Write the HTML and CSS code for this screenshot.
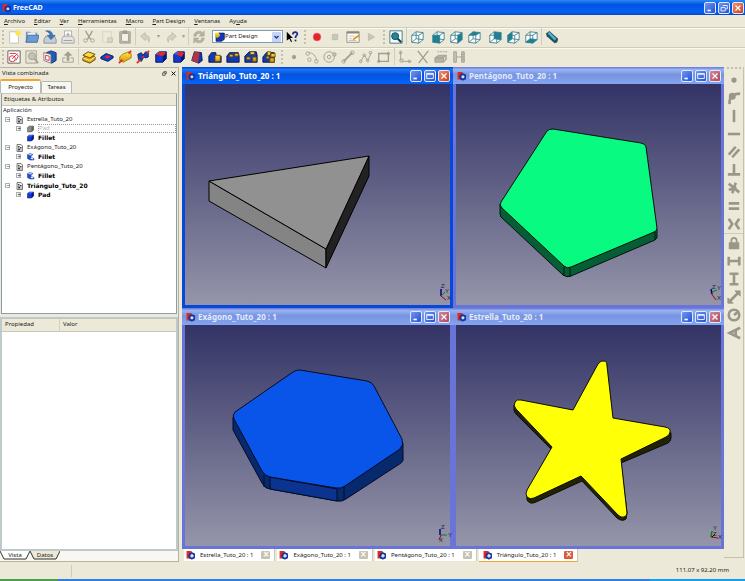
FILE: index.html
```html
<!DOCTYPE html>
<html lang="es">
<head>
<meta charset="utf-8">
<title>FreeCAD</title>
<link rel="stylesheet" href="styles.css">
</head>
<body>
<svg class="defs" aria-hidden="true">
  <defs>
    <linearGradient id="gold" x1="0" y1="0" x2="0" y2="1"><stop offset="0" stop-color="#ffe45a"/><stop offset="1" stop-color="#d39a00"/></linearGradient>
    <symbol id="logo" viewBox="0 0 16 16"><path d="M1 1h9v4H6v2h3v3H6v4H1z" fill="#e0281c"/><circle cx="10.500" cy="9.500" r="4.500" fill="none" stroke="#16389c" stroke-width="3"/><path d="M10.500 3v2M10.500 14v2M4 9.500h2M15 9.500h1M6 5l1 1M14 13l1 1M6 14l1-1M14 6l1-1" stroke="#16389c" stroke-width="2"/><circle cx="10.500" cy="9.500" r="2.500" fill="#d3e0ff"/></symbol>
    <symbol id="cube" viewBox="0 0 16 16"><path d="M2 5l4-3h8v8l-4 4H2z" fill="#1238d8" stroke="#051047"/><path d="M2 5l4-3h8l-4 3z" fill="#3c68ff"/><path d="M10 5l4-3v8l-4 4z" fill="#06187c"/></symbol>
    <symbol id="cubegray" viewBox="0 0 16 16"><path d="M2 5l4-3h8v8l-4 4H2z" fill="#8a8a86" stroke="#4c4c4a"/><path d="M10 5l4-3v8l-4 4z" fill="#5c5c5a"/></symbol>
    <symbol id="fil" viewBox="0 0 16 16"><path d="M2 3l5-2 6 2-4 3v3l6 2v3H7l-5-3z" fill="#1d4fd0" stroke="#102a66"/><path d="M2 3l5-2 5 2-4 2z" fill="#b9ccf5"/><path d="M9 9l5 2v2l-6-1z" fill="#dfe8fb"/></symbol>
    <symbol id="doc" viewBox="0 0 16 16"><path d="M3 1h8l3 3v11H3z" fill="#eee" stroke="#555" stroke-width="1.500"/><path d="M5 4h3v3H5zM9 6h3v3H9zM5 9h4v4H5zM10 11h2v2h-2z" fill="#444"/></symbol>
    <symbol id="wire" viewBox="0 0 16 16"><path d="M2 6v8l8 1V6zM2 6l5-4 8 1-5 3M15 3v8l-5 4M7 2v8l-5 4M7 10l8 1" fill="none" stroke="#3f7f8d"/></symbol>
    <symbol id="min" viewBox="0 0 12 12"><path d="M3 9h4" stroke="#fff" stroke-width="2"/></symbol>
    <symbol id="max" viewBox="0 0 12 12"><path d="M2 3h8v6H2zM2 4h8" fill="none" stroke="#fff"/></symbol>
    <symbol id="x" viewBox="0 0 12 12"><path d="M3 3l6 6M9 3l-6 6" stroke="#fff" stroke-width="1.500"/></symbol>
  </defs>
</svg>

<header class="titlebar">
  <svg class="logo"><use href="#logo"/></svg>
  <h1>FreeCAD</h1>
  <div class="winbtns">
    <button aria-label="Minimizar"><svg><use href="#min"/></svg></button>
    <button aria-label="Restaurar"><svg viewBox="0 0 12 12"><path d="M5 4V3h5v4H8M2.500 5.500h5v4h-5z" fill="none" stroke="#fff"/></svg></button>
    <button class="close" aria-label="Cerrar"><svg><use href="#x"/></svg></button>
  </div>
</header>

<nav class="menubar">
  <a href="#"><u>A</u>rchivo</a><a href="#"><u>E</u>ditar</a><a href="#"><u>V</u>er</a><a href="#"><u>H</u>erramientas</a><a href="#"><u>M</u>acro</a><a href="#"><u>P</u>art Design</a><a href="#"><u>V</u>entanas</a><a href="#">Ay<u>u</u>da</a>
</nav>

<div class="toolbar">
  <i class="grip"></i>
  <button aria-label="Nuevo"><svg viewBox="0 0 16 16"><path d="M3 2h10v13H3z" fill="#fff" stroke="#bbb"/><circle cx="12.500" cy="3.500" r="3" fill="#ffe640"/></svg></button>
  <button aria-label="Abrir"><svg viewBox="0 0 16 16"><path d="M1 2h5l1 1h7v11H1z" fill="#7894b4"/><path d="M3 3h9v4H3z" fill="#eee"/><path d="M3 6h13l-2 8H1z" fill="#6b9bd2" stroke="#3f6ea8"/></svg></button>
  <button aria-label="Guardar"><svg viewBox="0 0 16 16"><path d="M3 7h10l2 4v4H1v-4z" fill="#c5cdd6" stroke="#8390a0"/><path d="M3 1c5-1 8 1 8 5h3l-5 5-4-5h3c0-2-2-4-5-5z" fill="#3b78b8" stroke="#215082" stroke-width=".5"/></svg></button>
  <button aria-label="Imprimir"><svg viewBox="0 0 16 16"><path d="M4 1h8v7H4z" fill="#fff" stroke="#aaa"/><path d="M3 7h10l2 3v5H1v-5z" fill="#e4e4e2" stroke="#9e9e9e"/><path d="M3 12h10M8 3v4M6 5h4" stroke="#999"/></svg></button>
  <i class="sep"></i>
  <button class="off" aria-label="Cortar"><svg viewBox="0 0 16 16"><path d="M4 1l6 10M12 1L6 11" stroke-width="1.500"/><circle cx="4" cy="12" r="2"/><circle cx="12" cy="12" r="2"/></svg></button>
  <button class="off dim" aria-label="Copiar"><svg viewBox="0 0 16 16"><path d="M3 2h10v12H3z" fill="#efede0" opacity=".5"/><path d="M9 9h5v5H9z" fill="#d2cfbf"/></svg></button>
  <button class="off" aria-label="Pegar"><svg viewBox="0 0 16 16"><path d="M2 2h12v13H2z" fill="#bdbaab"/><path d="M4 4h8v9H4z" fill="#f4f2e8"/><path d="M6 1h4v3H6z" fill="#a19e90"/></svg></button>
  <i class="sep"></i>
  <button class="off dim" aria-label="Deshacer"><svg viewBox="0 0 16 16"><path d="M2 7l5-4v3c5 0 6 4 4 8 0-4-2-4-4-4v2z" fill="#c5c2b3"/></svg></button>
  <i class="caret">▾</i>
  <button class="off dim" aria-label="Rehacer"><svg viewBox="0 0 16 16"><path d="M14 7L9 3v3c-5 0-6 4-4 8 0-4 2-4 4-4v2z" fill="#c5c2b3"/></svg></button>
  <i class="caret">▾</i>
  <i class="sep"></i>
  <button class="off" aria-label="Actualizar"><svg viewBox="0 0 16 16"><path d="M2 7c0-6 8-7 10-4l2-2v6H8l2-2c-2-2-5-1-5 2zM14 9c0 6-8 7-10 4l-2 2V9h6l-2 2c2 2 5 1 5-2z" fill="#b5b2a4" stroke-width=".5"/></svg></button>
  <div class="combo">
    <svg viewBox="0 0 16 16"><path d="M3 5l4-2h8v9l-4 3H3z" fill="#1238b8" stroke="#051047"/><path d="M1 3l6-1 2 5-4 3-3-1z" fill="url(#gold)"/></svg>
    <select aria-label="Banco de trabajo"><option>Part Design</option></select>
    <svg class="drop" viewBox="0 0 8 10"><path d="M2 4l2 2 2-2" fill="none" stroke="#31456f" stroke-width="1.500"/></svg>
  </div>
  <button aria-label="¿Qué es esto?"><svg viewBox="0 0 16 16"><path d="M2 2v10l3-2 2 4 1-1-2-4h3z" fill="#000"/><path d="M9 5c0-4 6-3 5 0-1 2-2 1-2 4" fill="none" stroke="#1c2b8c" stroke-width="2"/><path d="M11 11h2v2h-2z" fill="#1c2b8c"/></svg></button>
  <i class="grip wide"></i>
  <button aria-label="Grabar macro"><svg viewBox="0 0 16 16"><circle cx="8" cy="8" r="4.500" fill="#e8222a" stroke="#f09090" stroke-width=".5"/></svg></button>
  <button class="off dim" aria-label="Detener macro"><svg viewBox="0 0 16 16"><path d="M5 5h6v6H5z" fill="#b5b2a4"/></svg></button>
  <button aria-label="Macros"><svg viewBox="0 0 16 16"><path d="M1 2h14v12H1z" fill="#fdfdf6" stroke="#8a8878"/><path d="M1 2h14v2H1z" fill="#8a8878"/><path d="M3 7h7M3 10h4M3 12h9" stroke="#bbb"/><path d="M8 11l7-5" stroke="#d9901c" stroke-width="2"/></svg></button>
  <button class="off dim" aria-label="Ejecutar macro"><svg viewBox="0 0 16 16"><path d="M5 4l7 4-7 4z" fill="#b5b2a4"/></svg></button>
  <i class="grip wide"></i>
  <button aria-label="Ajustar todo"><svg viewBox="0 0 16 16"><path d="M1 1h14v14H1z" fill="#fff" stroke="#2f7080"/><circle cx="7" cy="7" r="4" fill="#25869a" stroke="#0d4652"/><path d="M10 10l4 4" stroke="#0d4652" stroke-width="2.500"/></svg></button>
  <i class="sep"></i>
  <button aria-label="Axonométrica"><svg viewBox="0 0 16 16"><path d="M2 6l5-4 8 1v8l-5 4-8-1z" fill="#fff"/><use href="#wire"/></svg></button>
  <i class="sep clear"></i>
  <button aria-label="Frontal"><svg viewBox="0 0 16 16"><path d="M2 6l5-4 8 1v8l-5 4-8-1z" fill="#fff"/><use href="#wire"/><path d="M2 6h8v9l-8-1z" fill="#1f7f93"/></svg></button>
  <button aria-label="Superior"><svg viewBox="0 0 16 16"><path d="M2 6l5-4 8 1v8l-5 4-8-1z" fill="#fff"/><use href="#wire"/><path d="M10 6l5-3v8l-5 4z" fill="#1f7f93"/></svg></button>
  <button aria-label="Derecha"><svg viewBox="0 0 16 16"><path d="M2 6l5-4 8 1v8l-5 4-8-1z" fill="#fff"/><use href="#wire"/><path d="M2 6l5-4 8 1-5 3z" fill="#1f7f93"/></svg></button>
  <i class="sep clear"></i>
  <button aria-label="Posterior"><svg viewBox="0 0 16 16"><path d="M2 6l5-4 8 1v8l-5 4-8-1z" fill="#fff"/><use href="#wire"/><path d="M7 2l8 1v8l-8-1z" fill="#1f7f93"/></svg></button>
  <button aria-label="Izquierda"><svg viewBox="0 0 16 16"><path d="M2 6l5-4 8 1v8l-5 4-8-1z" fill="#fff"/><use href="#wire"/><path d="M2 6l5-4v8l-5 4z" fill="#1f7f93"/></svg></button>
  <button aria-label="Inferior"><svg viewBox="0 0 16 16"><path d="M2 6l5-4 8 1v8l-5 4-8-1z" fill="#fff"/><use href="#wire"/><path d="M2 14l5-4 8 1-5 4z" fill="#1f7f93"/></svg></button>
  <i class="sep"></i>
  <button aria-label="Medir"><svg viewBox="0 0 16 16"><path d="M1 4l4-3 10 9-1 4-3 1L2 7z" fill="#24505c"/><path d="M3 4l2-2 8 8-2 2z" fill="#4cb3c8"/></svg></button>
</div>

<div class="toolbar">
  <i class="grip"></i>
  <button aria-label="Nuevo croquis"><svg viewBox="0 0 16 16"><path d="M1 1h14v14H1z" fill="#fff" stroke="#555"/><circle cx="6" cy="10" r="3.500" fill="none" stroke="#d8232a"/><path d="M3 4h7l3 3-3 5M6 10l6-6" fill="none" stroke="#d8232a"/></svg></button>
  <button class="off" aria-label="Ver croquis"><svg viewBox="0 0 16 16"><path d="M1 1h12v14H1z" fill="#e6e3d6"/><circle cx="8" cy="7" r="4" fill="#c6c3b6"/><path d="M11 10l4 5" stroke-width="2"/></svg></button>
  <button aria-label="Mapear croquis"><svg viewBox="0 0 16 16"><path d="M4 3l5-2 6 2v9l-5 3-4-2z" fill="#1c5fb4" stroke="#0b2b62"/><path d="M1 3l8 2v10l-8-3z" fill="#fff" stroke="#777"/><path d="M3 6l4 1v5l-4-1z" fill="none" stroke="#d8232a"/></svg></button>
  <button class="off" aria-label="Salir del croquis"><svg viewBox="0 0 16 16"><path d="M5 9H2v5h12V9h-3"/><path d="M8 2l4 4H9v6H7V6H4z" fill="#a19e90"/></svg></button>
  <i class="sep"></i>
  <button aria-label="Pad"><svg viewBox="0 0 16 16"><path d="M1 9l6-4 8 3v3l-6 4-8-3z" fill="#e0a810" stroke="#5b4000"/><path d="M1 6l6-4 8 3-6 4z" fill="#ffd93c" stroke="#5b4000"/><path d="M1 9l8 3 6-4" fill="none" stroke="#fff2b0"/></svg></button>
  <button aria-label="Vaciado"><svg viewBox="0 0 16 16"><path d="M1 8l6-4 8 3v2l-6 4-8-3z" fill="#1540c8" stroke="#071a5c"/><path d="M5 8l3-2 4 1-3 3z" fill="#e22b20"/></svg></button>
  <button aria-label="Revolución"><svg viewBox="0 0 16 16"><path d="M2 8l3-3 7-3 3 2v5l-9 5-4-2z" fill="url(#gold)" stroke="#a87800"/><path d="M1 15l4-4M12 4l3-3" stroke="#e22b20" stroke-width="2"/></svg></button>
  <button aria-label="Ranura"><svg viewBox="0 0 16 16"><path d="M2 5l4-2 2 3 3-4 3 1v5l-3 1-2-1-3 5-3-2z" fill="#173fbd" stroke="#081b60"/><path d="M1 15l4-4M7 9l2-2M12 4l3-3" stroke="#e22b20" stroke-width="2"/></svg></button>
  <button aria-label="Redondeo"><svg viewBox="0 0 16 16"><use href="#cube"/><path d="M2 5l5-3 7 1-4 4z" fill="#df2a20"/></svg></button>
  <button aria-label="Chaflán"><svg viewBox="0 0 16 16"><use href="#cube"/><path d="M5 5l3-3 6 1-3 5z" fill="#df2a20"/></svg></button>
  <button aria-label="Inclinación"><svg viewBox="0 0 16 16"><path d="M2 12L5 2l8 1 1 9-4 3z" fill="#1238b8" stroke="#051047"/><path d="M2 12L5 2l6 1-2 12z" fill="#b33544"/></svg></button>
  <button aria-label="Simetría"><svg viewBox="0 0 16 16"><path d="M1 7l3-4h5v4h6v7H1z" fill="#1238b8" stroke="#051047"/><path d="M8 6h6v7H8z" fill="url(#gold)" stroke="#664800"/></svg></button>
  <button aria-label="Patrón lineal"><svg viewBox="0 0 16 16"><path d="M1 7l3-4h10l1 4v7H1z" fill="#1238b8" stroke="#051047"/><path d="M4 5h4v3H4zM10 4h4v3h-4z" fill="url(#gold)" stroke="#664800"/></svg></button>
  <button aria-label="Patrón polar"><svg viewBox="0 0 16 16"><path d="M1 7l5-5h8l1 4v8H1z" fill="#1238b8" stroke="#051047"/><path d="M7 2h5v3H7zM10 8h4v5h-4zM3 8h4v3H3z" fill="url(#gold)" stroke="#664800"/></svg></button>
  <button aria-label="Transformación múltiple"><svg viewBox="0 0 16 16"><path d="M1 8l4-5h9v11H1z" fill="#1238b8" stroke="#051047"/><path d="M6 2h4v4H6zM10 4h5v4h-5zM9 9h5v5H9zM5 7h3v3H5z" fill="url(#gold)" stroke="#664800"/></svg></button>
  <i class="grip wide"></i>
  <button class="off" aria-label="Punto"><svg viewBox="0 0 16 16"><circle cx="8" cy="8" r="2" fill="#a19e90"/></svg></button>
  <button class="off" aria-label="Arco"><svg viewBox="0 0 16 16"><path d="M4 3c5 0 9 4 9 9"/><circle cx="3" cy="4" r="2"/><circle cx="5" cy="11" r="2"/><circle cx="13" cy="13" r="2"/></svg></button>
  <button class="off" aria-label="Círculo"><svg viewBox="0 0 16 16"><circle cx="7" cy="8" r="6"/><circle cx="7" cy="8" r="2"/><circle cx="13" cy="5" r="2" fill="#c5c2b3"/></svg></button>
  <button class="off" aria-label="Línea"><svg viewBox="0 0 16 16"><path d="M3 13L13 3" stroke-width="2"/><circle cx="3" cy="13" r="2"/><circle cx="13" cy="3" r="2"/></svg></button>
  <button class="off" aria-label="Polilínea"><svg viewBox="0 0 16 16"><path d="M2 13l4-7 4 6 4-9"/><circle cx="2" cy="13" r="1.500"/><circle cx="6" cy="6" r="1.500"/><circle cx="10" cy="12" r="1.500"/><circle cx="13" cy="3" r="1.500"/></svg></button>
  <button class="off" aria-label="Rectángulo"><svg viewBox="0 0 16 16"><path d="M2 4h11v9H2z" stroke-width="1.500"/><circle cx="2" cy="13" r="1.500"/><circle cx="13" cy="4" r="1.500"/></svg></button>
  <i class="sep"></i>
  <button class="off" aria-label="Empalme"><svg viewBox="0 0 16 16"><path d="M3 1v9c0 2 1 3 3 3h9"/><circle cx="3" cy="3" r="1.500"/><circle cx="4" cy="12" r="2"/><circle cx="13" cy="13" r="1.500"/></svg></button>
  <button class="off" aria-label="Recortar"><svg viewBox="0 0 16 16"><path d="M2 1l11 14M14 1L3 15" stroke-width="1.500"/></svg></button>
  <button class="off" aria-label="Geometría externa"><svg viewBox="0 0 16 16"><path d="M1 9l4-3h9l-3 3zM1 9v5h10V9M11 14l3-3V6" fill="#b5b2a4"/><path d="M4 2h11" stroke-dasharray="2 1"/></svg></button>
  <button class="off" aria-label="Construcción"><svg viewBox="0 0 16 16"><path d="M2 2h3v12H2zM5 8h6M11 2h3v12h-3zM11 5h3M11 8h3M11 11h3" fill="#c5c2b3"/></svg></button>
</div>

<main class="work">
  <aside class="dock">
    <div class="dockhead"><h2>Vista combinada</h2>
      <button aria-label="Flotar"><svg viewBox="0 0 8 8"><path d="M3 3V1h4v3H5M1 3h4v4H1z" fill="none" stroke="#222"/></svg></button>
      <button aria-label="Cerrar panel"><svg viewBox="0 0 8 8"><path d="M1 1l6 6M7 1L1 7" stroke="#000" stroke-width="1.500"/></svg></button>
    </div>
    <div class="docktabs"><button class="on">Proyecto</button><button>Tareas</button></div>
    <section class="tree">
      <h3>Etiquetas &amp; Atributos</h3>
      <p>Aplicación</p>
      <ul>
        <li><div class="row"><i class="exp">−</i><svg><use href="#doc"/></svg><span>Estrella_Tuto_20</span></div>
          <ul>
            <li class="row hid"><i class="exp">+</i><svg><use href="#cubegray"/></svg><span>Pad</span></li>
            <li class="row bold"><i class="exp none"></i><svg><use href="#cube"/></svg><span>Fillet</span></li>
          </ul></li>
        <li><div class="row"><i class="exp">−</i><svg><use href="#doc"/></svg><span>Exágono_Tuto_20</span></div>
          <ul><li class="row bold"><i class="exp">+</i><svg><use href="#fil"/></svg><span>Fillet</span></li></ul></li>
        <li><div class="row"><i class="exp">−</i><svg><use href="#doc"/></svg><span>Pentágono_Tuto_20</span></div>
          <ul><li class="row bold"><i class="exp">+</i><svg><use href="#fil"/></svg><span>Fillet</span></li></ul></li>
        <li><div class="row bold"><i class="exp">−</i><svg><use href="#doc"/></svg><span>Triángulo_Tuto_20</span></div>
          <ul><li class="row bold"><i class="exp">+</i><svg><use href="#cube"/></svg><span>Pad</span></li></ul></li>
      </ul>
    </section>
    <section class="props">
      <table><thead><tr><th>Propiedad</th><th>Valor</th></tr></thead></table>
    </section>
    <div class="foottabs">
      <button class="on"><svg viewBox="0 0 30 9" preserveAspectRatio="none"><path d="M0 0l4 8h22l4-8" fill="#fff" stroke="#333"/></svg><span>Vista</span></button>
      <button><svg viewBox="0 0 30 9" preserveAspectRatio="none"><path d="M0 0l4 8h22l4-8" fill="#ece9d8" stroke="#333"/></svg><span>Datos</span></button>
    </div>
  </aside>

  <section class="center">
    <div class="mdi">
      <article class="win active">
        <header><svg class="logo"><use href="#logo"/></svg><h2>Triángulo_Tuto_20 : 1</h2>
          <div class="winbtns"><button aria-label="Minimizar"><svg><use href="#min"/></svg></button><button aria-label="Maximizar"><svg><use href="#max"/></svg></button><button class="close" aria-label="Cerrar"><svg><use href="#x"/></svg></button></div>
        </header>
        <div class="view">
          <svg class="scene" viewBox="0 0 265 221"><g stroke="#000" stroke-linejoin="round"><path d="M24 97l117 68v19L24 117z" fill="#848484"/><path d="M141 165l43-93v20l-43 92z" fill="#222"/><path d="M24 97L184 72l-43 93z" fill="#919191"/></g></svg>
          <svg class="axis" viewBox="0 0 14 18"><path d="M3 6v7" stroke="#00008b" stroke-width="1.500"/><path d="M3 13l4-4" stroke="#080"/><path d="M3 13l5 4" stroke="#a00"/><text x="3" y="5">Z</text><text x="7" y="10">Y</text><text x="9" y="17">X</text></svg>
        </div>
      </article>
      <article class="win">
        <header><svg class="logo"><use href="#logo"/></svg><h2>Pentágono_Tuto_20 : 1</h2>
          <div class="winbtns"><button aria-label="Minimizar"><svg><use href="#min"/></svg></button><button aria-label="Maximizar"><svg><use href="#max"/></svg></button><button class="close" aria-label="Cerrar"><svg><use href="#x"/></svg></button></div>
        </header>
        <div class="view">
          <svg class="scene" viewBox="0 0 265 221"><g stroke="#04120a" stroke-linejoin="round"><path d="M44 120v10l1 3 62 58q4 3 8 1l84-36q3-2 2-5v-6z" fill="#065e36"/><path d="M108 183v9M114 184v9M199 148v8" fill="none"/><path d="M97 45l88 14q5 1 5 4l11 81q0 3-3 4l-83 35q-4 2-7-1l-62-58q-3-3-1-6l46-71q2-2 6-2z" fill="#09fa80"/></g></svg>
          <svg class="axis" viewBox="0 0 14 18"><path d="M2 6l1 5" stroke="#00008b" stroke-width="1.500"/><path d="M3 9l5-2" stroke="#080"/><path d="M2 10l5 7" stroke="#a00"/><text x="3" y="6">Z</text><text x="8" y="7">Y</text><text x="8" y="17">X</text></svg>
        </div>
      </article>
      <article class="win">
        <header><svg class="logo"><use href="#logo"/></svg><h2>Exágono_Tuto_20 : 1</h2>
          <div class="winbtns"><button aria-label="Minimizar"><svg><use href="#min"/></svg></button><button aria-label="Maximizar"><svg><use href="#max"/></svg></button><button class="close" aria-label="Cerrar"><svg><use href="#x"/></svg></button></div>
        </header>
        <div class="view">
          <svg class="scene" viewBox="0 0 265 221"><g stroke="#050b22" stroke-linejoin="round"><path d="M48 92v13l29 53q3 6 8 6l67 12q5 1 9-2l55-36q3-2 2-6v-14z" fill="#072a6e"/><path d="M85 152l67 12v12l-67-12z" fill="#0a3490"/><path d="M79 150v12M159 162v13" fill="none"/><path d="M115 45l67 11q5 1 7 5l28 53q2 6-2 10l-55 37q-4 3-9 2l-66-11q-5-1-8-6L49 94q-2-4 1-7l58-40q3-2 7-2z" fill="#0955ea"/></g></svg>
          <svg class="axis" viewBox="0 0 14 18"><path d="M2 5v6" stroke="#00008b" stroke-width="1.500"/><path d="M3 11h6" stroke="#080"/><path d="M3 11l-2 5" stroke="#a00"/><text x="3" y="5">Z</text><text x="10" y="13">Y</text><text x="1" y="18">X</text></svg>
        </div>
      </article>
      <article class="win">
        <header><svg class="logo"><use href="#logo"/></svg><h2>Estrella_Tuto_20 : 1</h2>
          <div class="winbtns"><button aria-label="Minimizar"><svg><use href="#min"/></svg></button><button aria-label="Maximizar"><svg><use href="#max"/></svg></button><button class="close" aria-label="Cerrar"><svg><use href="#x"/></svg></button></div>
        </header>
        <div class="view">
          <svg class="scene" viewBox="0 0 265 221"><g stroke="#0c0c00" stroke-linejoin="round"><path d="M58 80v5q0 2 3 5l35 35 2 2-27 43v5q3 5 9 2l46-21 35 37q5 4 9 1l1-6-6-50 47-20q3-2 3-5v-5z" fill="#222208"/><path d="M142 39q3-4 6-3 3 0 3 5l6 52 52 9q6 1 5 5 0 3-4 5l-45 22 6 54q0 3-3 4-3 1-6-2l-37-39-47 22q-4 2-7-1-2-3 0-7l25-43-36-38q-3-3-1-7 2-3 6-2l52 10z" fill="#ffff05"/></g></svg>
          <svg class="axis" viewBox="0 0 14 18"><path d="M2 13l1-6" stroke="#080" stroke-width="1.500"/><path d="M2 13l7 1" stroke="#a00"/><path d="M3 13l3-3" stroke="#008"/><text x="4" y="6">Y</text><text x="4" y="12">Z</text><text x="9" y="15">X</text></svg>
        </div>
      </article>
    </div>
    <div class="mditabs">
      <div class="mtab"><svg class="logo"><use href="#logo"/></svg><button>Estrella_Tuto_20 : 1</button><button class="x" aria-label="Cerrar Estrella">×</button></div>
      <div class="mtab"><svg class="logo"><use href="#logo"/></svg><button>Exágono_Tuto_20 : 1</button><button class="x" aria-label="Cerrar Exágono">×</button></div>
      <div class="mtab"><svg class="logo"><use href="#logo"/></svg><button>Pentágono_Tuto_20 : 1</button><button class="x" aria-label="Cerrar Pentágono">×</button></div>
      <div class="mtab on"><svg class="logo"><use href="#logo"/></svg><button>Triángulo_Tuto_20 : 1</button><button class="x" aria-label="Cerrar Triángulo">×</button></div>
    </div>
  </section>

  <aside class="sidebar">
    <i class="hgrip"></i>
    <button aria-label="Coincidencia"><svg viewBox="0 0 16 16"><circle cx="8" cy="8" r="2" fill="#99978a" stroke-width="2"/></svg></button>
    <button aria-label="Punto en objeto"><svg viewBox="0 0 16 16"><path d="M3 15C2 7 7 3 15 3"/><circle cx="6" cy="6" r="2.500" fill="#99978a"/></svg></button>
    <button aria-label="Vertical"><svg viewBox="0 0 16 16"><path d="M8 1v14"/></svg></button>
    <button aria-label="Horizontal"><svg viewBox="0 0 16 16"><path d="M1 8h14"/></svg></button>
    <button aria-label="Paralela"><svg viewBox="0 0 16 16"><path d="M2 11l8-9M6 14l8-9"/></svg></button>
    <button aria-label="Perpendicular"><svg viewBox="0 0 16 16"><path d="M8 1v12M1 13h14"/></svg></button>
    <button aria-label="Tangente"><svg viewBox="0 0 16 16"><path d="M2 3l12 10M2 10l9-2M6 14l4-12"/></svg></button>
    <button aria-label="Igual"><svg viewBox="0 0 16 16"><path d="M2 5h12M2 11h12"/></svg></button>
    <button aria-label="Simétrica"><svg viewBox="0 0 16 16"><path d="M2 2l4 6-4 6M14 2l-4 6 4 6"/></svg></button>
    <hr>
    <button aria-label="Bloquear"><svg viewBox="0 0 16 16"><path d="M3 8h10v6H3z" fill="#99978a" stroke-width="2"/><path d="M5 8V5c0-4 6-4 6 0v3" stroke-width="2"/></svg></button>
    <button aria-label="Distancia horizontal"><svg viewBox="0 0 16 16"><path d="M2 3v10M14 3v10M2 8h12"/></svg></button>
    <button aria-label="Distancia vertical"><svg viewBox="0 0 16 16"><path d="M3 2h10M3 14h10M8 2v12"/></svg></button>
    <button aria-label="Longitud"><svg viewBox="0 0 16 16"><path d="M4 12l8-8"/><path d="M9 1h6v6zM1 9v6h6z" fill="#99978a" stroke-width="1"/></svg></button>
    <button aria-label="Radio"><svg viewBox="0 0 16 16"><circle cx="8" cy="8" r="6"/><path d="M8 8l4-3"/></svg></button>
    <button aria-label="Ángulo"><svg viewBox="0 0 16 16"><path d="M15 2L3 8l12 6M10 4v8"/></svg></button>
  </aside>
</main>

<footer class="status"><span></span><output>111.07 x 92.20 mm</output></footer>
<div class="taskbar"><i></i><b></b></div>
</body>
</html>
```
FILE: styles.css
```css
* { box-sizing: border-box; }
html, body { height: 100%; }
body {
  margin: 0;
  display: flex;
  flex-direction: column;
  background: #ece9d8;
  color: #222;
  font: 6px/9px "Noto Sans", "Open Sans", sans-serif;
  overflow: hidden;
}
h1, h2, h3, p, ul { margin: 0; padding: 0; font: inherit; list-style: none; }
button { margin: 0; padding: 0; border: 0; background: none; font: inherit; color: inherit; }
svg { display: block; flex: none; }
i { font-style: normal; }
a { color: inherit; text-decoration: none; }
.defs { position: absolute; width: 0; height: 0; }
.logo { width: 9px; height: 10px; }

/* Window frame */
.titlebar {
  display: flex; align-items: center; gap: 2px;
  flex: none; height: 15px; padding: 0 1px 0 2px;
  background: linear-gradient(#2b8af5, #0453de 30%, #0560f5 80%, #0346c4);
}
.titlebar h1 { flex: 1; color: #fff; font: bold 7px/12px "Noto Sans", sans-serif; }
.winbtns { display: flex; gap: 2px; }
.winbtns button {
  width: 12px; height: 12px;
  border: 1px solid #dfe8ff; border-radius: 2px;
  background: linear-gradient(135deg, #6f97f2, #2250d8);
}
.winbtns svg { width: 10px; height: 10px; }
.winbtns .close { background: linear-gradient(135deg, #f0906e, #d03c14); }

.menubar { display: flex; gap: 9px; flex: none; height: 12px; padding: 2px 4px; }

/* Toolbars */
.toolbar {
  display: flex; align-items: center;
  flex: none; height: 20px; padding: 0 0 2px 2px;
  border-top: 1px solid #cfccbc;
  box-shadow: inset 0 1px #faf9f2;
}
.toolbar button { width: 18px; height: 16px; display: grid; place-items: center; flex: none; }
.toolbar button svg { width: 14px; height: 14px; }
.off svg { fill: none; stroke: #a19e90; }
.dim { opacity: .6; }
.grip { width: 2px; height: 14px; margin-right: 1px; border-left: 2px dotted #c3c0b0; flex: none; }
.grip.wide { margin: 0 2px 0 3px; }
.sep { width: 1px; height: 17px; margin: 0 1px; background: #d0cdbd; flex: none; }
.sep.clear { background: none; }
.caret { width: 7px; color: #a19e90; text-align: center; }
.combo {
  display: flex; align-items: center;
  width: 71px; height: 13px; margin-left: 4px; padding: 0 1px;
  border: 1px solid #7f9db9; background: #fff;
}
.combo svg { width: 11px; height: 11px; }
.combo select { flex: 1; min-width: 0; padding: 0; border: 0; appearance: none; background: none; font: inherit; color: inherit; }
.combo .drop { width: 9px; height: 10px; background: #c3d3fb; border-radius: 1px; }

.work { flex: 1; min-height: 0; display: grid; grid-template-columns: 182px 1fr 21px; }

/* Combined view */
.dock { display: flex; flex-direction: column; min-height: 0; margin-right: 3px; border: solid #b5b2a2; border-width: 1px 1px 1px 0; }
.dockhead { display: flex; align-items: center; gap: 4px; height: 11px; padding: 0 2px; flex: none; }
.dockhead h2 { flex: 1; }
.dockhead svg { width: 5px; height: 5px; }
.docktabs { display: flex; align-items: end; height: 14px; flex: none; }
.docktabs button { height: 12px; width: 31px; border: 1px solid #b4b8b8; border-bottom: 0; border-radius: 2px 2px 0 0; background: #f7f6ef; }
.docktabs .on { height: 14px; width: 41px; border-top: 2px solid #f5a32c; background: #fcfcfa; }
.tree { flex: 221 1 0; margin: 0 1px 3px; border: 1px solid #8b9da8; border-top-color: #c9c7ba; background: #fff; }
.tree h3 { height: 12px; padding: 1px 2px; background: #ece9d8; border-bottom: 1px solid #c9c7ba; }
.tree p { padding-left: 1px; height: 9px; }
.tree > ul { margin-left: 3px; }
.tree > ul > li + li { margin-top: 1px; }
.tree ul ul { margin-left: 11px; }
.row { display: flex; align-items: center; height: 9px; }
.row svg { width: 9px; height: 8px; margin: 0 3px 0 5px; }
.row .exp { width: 5px; height: 5px; border: 1px solid #a8b0b8; font: 5px/3px "DejaVu Sans"; text-align: center; color: #222; }
.row .exp.none { border-color: transparent; }
.bold { font: bold 6px/9px "DejaVu Sans", sans-serif; color: #000; }
.hid { color: #b5b5b5; }
.hid span { flex: 1; border: 1px dotted #999; line-height: 7px; }
.props { flex: 232 1 0; border: 2px solid #bccacc; background: #fff; }
.props table { width: 100%; border-collapse: collapse; background: #ece9d8; }
.props th { height: 12px; padding: 0 0 0 3px; text-align: left; font-weight: normal; border-bottom: 1px solid #c9c7ba; }
.props th + th { border-left: 1px solid #d4d1c2; }
.props th:first-child { width: 33%; }
.foottabs { display: flex; height: 10px; flex: none; background: #f8f7f1; }
.foottabs button { display: grid; width: 30px; height: 9px; }
.foottabs button > * { grid-area: 1 / 1; width: 30px; height: 9px; line-height: 8px; }
.foottabs span { z-index: 1; }

/* Document windows */
.center { display: flex; flex-direction: column; min-width: 0; min-height: 0; }
.mdi { flex: 1; min-height: 0; display: grid; grid-template: 1fr 1fr / 1fr 1fr; }
.win { display: flex; flex-direction: column; min-width: 0; min-height: 0; border: solid #6974d8; border-width: 0 3px 3px; background: #6974d8; }
.win header { display: flex; align-items: center; gap: 3px; height: 17px; flex: none; margin: 0 -3px; padding: 1px 3px 0 4px; background: linear-gradient(#6975d5, #96b4f3 15%, #7893e0 45%, #83a4f0); }
.win h2 { flex: 1; color: #e2eafc; font: bold 8px/10px "Noto Sans", sans-serif; white-space: nowrap; }
.win .close { background: linear-gradient(135deg, #cf8a9a, #b0475c); }
.active { border-color: #0748d8; background: #0748d8; }
.active header { background: linear-gradient(#0340c0, #1975f8 15%, #0453de 45%, #0565fa); }
.active h2 { color: #fff; }
.active .close { background: linear-gradient(135deg, #f0906e, #d03c14); }
.view { position: relative; flex: 1; min-height: 0; background: linear-gradient(#333366, #9595aa); }
.scene { width: 100%; height: 100%; }
.axis { position: absolute; right: -2px; bottom: 4px; width: 14px; height: 18px; font: 6px "Liberation Sans", sans-serif; fill: #222; }

.mditabs { display: flex; gap: 2px; flex: none; height: 13px; padding-left: 2px; align-items: start; }
.mtab { display: flex; align-items: center; gap: 5px; height: 12px; padding: 0 4px 0 2px; background: #fff; border-right: 1px solid #c9c7ba; }
.mtab .x { width: 9px; height: 8px; margin-left: 3px; border-radius: 1px; background: #c6c3b0; color: #fff; font: bold 8px/8px "DejaVu Sans"; }
.mtab.on { height: 13px; padding: 0 4px; border-bottom: 1px solid #f5a32c; }
.mtab.on .x { background: #dc5a3c; }

/* Constraint toolbar */
.sidebar { margin: 0 1px 4px 0; border-right: 1px solid #c3c0b0; border-bottom: 1px solid #c3c0b0; display: flex; flex-direction: column; align-items: center; }
.sidebar button { height: 18px; width: 18px; display: grid; place-items: center; }
.sidebar svg { width: 14px; height: 14px; fill: none; stroke: #99978a; stroke-width: 3; }
.hgrip { width: 14px; height: 4px; border-top: 2px dotted #c3c0b0; }
.sidebar hr { width: 100%; height: 1px; margin: 0; border: 0; background: #cfccbc; }

.status { display: flex; align-items: center; flex: none; height: 17px; padding-right: 16px; }
.status span { width: 72px; height: 12px; border-right: 1px solid #cfccbc; }
.status output { margin-left: auto; }
.taskbar { display: flex; height: 2px; flex: none; background: #2f7fe4; }
.taskbar i { width: 58px; background: #46a048; }
.taskbar b { margin-left: auto; width: 95px; background: #12a0ee; }
```
